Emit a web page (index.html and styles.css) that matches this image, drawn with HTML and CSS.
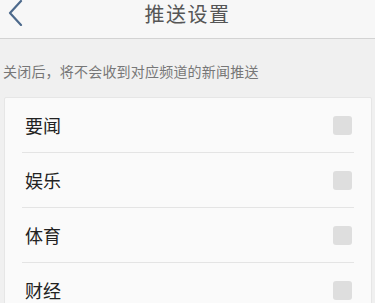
FILE: index.html
```html
<!DOCTYPE html>
<html lang="zh-CN">
<head>
    <meta charset="UTF-8">
    <meta name="viewport" content="width=device-width, initial-scale=1.0">
    <title>推送设置</title>
    <link rel="stylesheet" href="styles.css">
</head>
<body>
    <div class="header">
        <a href="#" class="back" title="返回">
            <svg width="16" height="26" viewBox="0 0 16 26">
                <path d="M14 1 L3 13 L14 25" fill="none" stroke="#4d6a8c" stroke-width="2.2" stroke-linecap="round" stroke-linejoin="round"/>
            </svg>
        </a>
        <h1>推送设置</h1>
    </div>

    <p class="hint">关闭后，将不会收到对应频道的新闻推送</p>

    <div class="card">
        <label class="row">
            <span>要闻</span>
            <input type="checkbox" class="check">
        </label>
        <label class="row">
            <span>娱乐</span>
            <input type="checkbox" class="check">
        </label>
        <label class="row">
            <span>体育</span>
            <input type="checkbox" class="check">
        </label>
        <label class="row">
            <span>财经</span>
            <input type="checkbox" class="check">
        </label>
    </div>
</body>
</html>
```

FILE: styles.css
```css
body {
    margin: 0;
    padding: 0;
    background-color: #f0f0f0;
    color: #333;
    font-family: "Noto Sans CJK SC", "Noto Sans", sans-serif;
}

.header {
    height: 38px;
    background-color: #f7f7f7;
    border-bottom: 1px solid #d3d3d3;
    display: flex;
    align-items: center;
    justify-content: center;
    position: relative;
}

.header h1 {
    margin: 0;
    font-size: 20px;
    font-weight: normal;
    color: #555;
    letter-spacing: 1.5px;
    margin-top: -11px;
}

.header .back {
    position: absolute; /* 返回按钮在左上角 */
    left: 7px;
    top: 0;
    display: block;
    width: 16px;
    height: 26px;
}

.hint {
    margin: 0;
    padding: 22px 0 0 3px;
    height: 36px;
    font-size: 14px;
    color: #777;
    line-height: 20px;
    letter-spacing: 0.2px;
}

.card {
    margin: 0 3px 0 4px;
    background-color: #fafafa;
    border: 1px solid #e6e6e6;
    border-radius: 2px;
    padding: 0 17px 0 17px;
}

.row {
    display: flex;
    align-items: center;
    justify-content: space-between;
    height: 54px;
    border-bottom: 1px solid #e4e4e4;
    font-size: 18px;
    color: #222;
}

.row span {
    padding-left: 3px;
}

.check {
    appearance: none;
    -webkit-appearance: none;
    margin: 0 2px 0 0;
    width: 19px;
    height: 19px;
    background-color: #dedede;
    border-radius: 3px;
}
```
